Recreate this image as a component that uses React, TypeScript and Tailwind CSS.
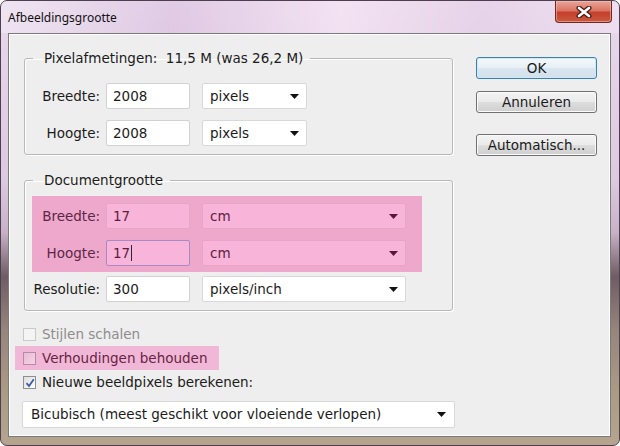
import React from 'react';

const ui = "font-['DejaVu_Sans',sans-serif] text-[13.5px]";

function Field({
  value,
  pink,
  focused,
  caret,
}: {
  value: string;
  pink?: boolean;
  focused?: boolean;
  caret?: boolean;
}) {
  const tone = pink
    ? focused
      ? 'border-[#a88ac4] bg-[#f8b4d9] text-[#5d1f3f]'
      : 'border-[#e8a3c7] bg-[#f8b4d9] text-[#5d1f3f]'
    : 'border-[#d2d2d2] bg-white text-[#1b1b1b]';
  return (
    <div className={`ml-[6px] flex h-[26px] w-[84px] items-center rounded-[2px] border pl-[6px] ${tone}`}>
      <span>{value}</span>
      {caret && <span className="ml-px inline-block h-[16px] w-px bg-[#2a2a2a]" />}
    </div>
  );
}

function Combo({ value, width, pink }: { value: string; width: string; pink?: boolean }) {
  const tone = pink
    ? 'border-[#e8a3c7] bg-[#f8b4d9] text-[#5d1f3f]'
    : 'border-[#d8d8d8] bg-white text-[#1b1b1b]';
  return (
    <div className={`ml-[12px] flex h-[26px] items-center justify-between rounded-[2px] border pl-[7px] pr-[7px] ${width} ${tone}`}>
      <span>{value}</span>
      <svg width="9" height="5" viewBox="0 0 9 5">
        <path d="M0 0h9L4.5 5z" fill={pink ? '#5a1838' : '#111'} />
      </svg>
    </div>
  );
}

function Row({
  label,
  labelWidth,
  value,
  unit,
  unitWidth,
  pink,
  focused,
  caret,
}: {
  label: string;
  labelWidth: string;
  value: string;
  unit: string;
  unitWidth: string;
  pink?: boolean;
  focused?: boolean;
  caret?: boolean;
}) {
  return (
    <div className="flex h-[26px] items-center">
      <span className={`${labelWidth} whitespace-nowrap text-right ${pink ? 'text-[#5c2646]' : 'text-[#1b1b1b]'}`}>{label}</span>
      <Field value={value} pink={pink} focused={focused} caret={caret} />
      <Combo value={unit} width={unitWidth} pink={pink} />
    </div>
  );
}

function Group({ title, children }: { title: string; children: React.ReactNode }) {
  return (
    <fieldset className="ml-[15px] w-[429px] rounded-[3px] border border-[#b8b8b8] shadow-[inset_1px_1px_0_#ffffff,1px_1px_0_#ffffff]">
      <legend className="ml-[8px] whitespace-pre pl-[11px] pr-[7px] leading-[16px] text-[#1b1b1b]">{title}</legend>
      {children}
    </fieldset>
  );
}

function Check({ state }: { state: 'disabled' | 'pink' | 'checked' }) {
  const box =
    state === 'disabled'
      ? 'border-[#c9c9c9] bg-[#f4f4f4]'
      : state === 'pink'
        ? 'border-[#b88aa6] bg-[linear-gradient(135deg,#e9bcd6,#f6d2e6)]'
        : 'border-[#8e8f8f] bg-[linear-gradient(135deg,#dcdcdc,#ffffff)]';
  return (
    <div className={`flex h-[13px] w-[13px] shrink-0 items-center justify-center border ${box}`}>
      {state === 'checked' && (
        <svg width="10" height="10" viewBox="0 0 10 10">
          <path d="M1.5 5.2 L4 8 L8.8 1.2" fill="none" stroke="#3f5ba8" strokeWidth="1.8" />
        </svg>
      )}
    </div>
  );
}

function Button({ label, primary }: { label: string; primary?: boolean }) {
  const tone = primary
    ? 'border-[#3c7fb1] bg-[linear-gradient(180deg,#f4f8fb_0%,#e8f0f6_48%,#d9e6ef_52%,#d3e1ea_100%)] shadow-[inset_0_0_0_1px_#cfe9f8]'
    : 'border-[#707070] bg-[linear-gradient(180deg,#f3f3f3_0%,#ebebeb_48%,#dddddd_52%,#cfcfcf_100%)] shadow-[inset_0_0_0_1px_#fbfbfb]';
  return (
    <div className={`flex h-[22px] w-[121px] items-center justify-center rounded-[3px] border text-[#1b1b1b] ${tone}`}>
      {label}
    </div>
  );
}

export default function App() {
  return (
    <div
      className={`flex h-[446px] w-[620px] flex-col overflow-hidden rounded-[7px] border border-[#4e3f50] bg-[linear-gradient(180deg,#e9d9ec_0%,#dccae0_40%,#c9b2c8_52%,#6f5c64_62%,#96857c_74%,#ab9b84_88%,#b5a58e_100%)] ${ui}`}
    >
      <div className="flex h-[32px] shrink-0 items-start bg-[linear-gradient(90deg,rgba(255,255,255,0.3)_0%,rgba(205,170,212,0.3)_28%,rgba(255,238,250,0.45)_55%,rgba(225,195,228,0.25)_78%,rgba(250,235,248,0.35)_100%)]">
        <span className="pl-[7px] pt-[9px] font-['Noto_Sans',sans-serif] text-[12px] leading-[16px] text-[#111]">
          Afbeeldingsgrootte
        </span>
        <div className="ml-auto mr-[7px] flex h-[22px] w-[57px] items-center justify-center rounded-b-[4px] border border-t-0 border-[#6e2a22] bg-[linear-gradient(180deg,#eaa597_0%,#db7665_45%,#c6402c_55%,#c95a40_100%)] shadow-[inset_0_0_0_1px_rgba(255,200,190,0.5)]">
          <svg width="16" height="12" viewBox="0 0 16 12">
            <path d="M3 2 L13 10 M13 2 L3 10" stroke="#4a1a16" strokeWidth="5" strokeLinecap="round" />
            <path d="M3 2 L13 10 M13 2 L3 10" stroke="#ffffff" strokeWidth="2.6" strokeLinecap="round" />
          </svg>
        </div>
      </div>

      <div className="mb-[8px] ml-[7px] mr-[8px] flex flex-1 border border-[#7a7a7a] bg-[#eeeeee] shadow-[inset_0_0_0_1px_#ffffff]">
        <div className="flex w-[467px] shrink-0 flex-col pt-[16px]">
          <Group title="Pixelafmetingen:  11,5 M (was 26,2 M)">
            <div className="flex flex-col gap-[11px] pb-[8px] pt-[17px]">
              <Row label="Breedte:" labelWidth="w-[75px]" value="2008" unit="pixels" unitWidth="w-[105px]" />
              <Row label="Hoogte:" labelWidth="w-[75px]" value="2008" unit="pixels" unitWidth="w-[105px]" />
            </div>
          </Group>

          <div className="mt-[17px]">
            <Group title="Documentgrootte">
              <div className="pb-[8px] pt-[8px]">
                <div className="ml-[7px] flex w-[390px] flex-col gap-[11px] bg-[#eea8cb] pb-[6px] pt-[7px]">
                  <Row label="Breedte:" labelWidth="w-[68px]" value="17" unit="cm" unitWidth="w-[204px]" pink />
                  <Row label="Hoogte:" labelWidth="w-[68px]" value="17" unit="cm" unitWidth="w-[204px]" pink focused caret />
                </div>
                <div className="mt-[4px]">
                  <Row label="Resolutie:" labelWidth="w-[75px]" value="300" unit="pixels/inch" unitWidth="w-[204px]" />
                </div>
              </div>
            </Group>
          </div>

          <div className="ml-[6px] mt-[11px] flex flex-col">
            <div className="flex h-[24px] items-center gap-[6px] pl-[8px] text-[#8d8d8d]">
              <Check state="disabled" />
              <span>Stijlen schalen</span>
            </div>
            <div className="flex h-[24px] w-[204px] items-center gap-[6px] bg-[#f0b8d6] pl-[8px] text-[#6a1f45]">
              <Check state="pink" />
              <span className="whitespace-nowrap">Verhoudingen behouden</span>
            </div>
            <div className="flex h-[25px] items-center gap-[6px] pl-[8px] text-[#1b1b1b]">
              <Check state="checked" />
              <span>Nieuwe beeldpixels berekenen:</span>
            </div>
          </div>

          <div className="ml-[13px] mt-[6px] flex h-[27px] w-[433px] items-center justify-between rounded-[2px] border border-[#d8d8d8] bg-white pl-[8px] pr-[8px] text-[#1b1b1b]">
            <span>Bicubisch (meest geschikt voor vloeiende verlopen)</span>
            <svg width="9" height="5" viewBox="0 0 9 5">
              <path d="M0 0h9L4.5 5z" fill="#111" />
            </svg>
          </div>
        </div>

        <div className="flex flex-col pt-[23px]">
          <Button label="OK" primary />
          <div className="mt-[12px]">
            <Button label="Annuleren" />
          </div>
          <div className="mt-[21px]">
            <Button label="Automatisch..." />
          </div>
        </div>
      </div>
    </div>
  );
}
